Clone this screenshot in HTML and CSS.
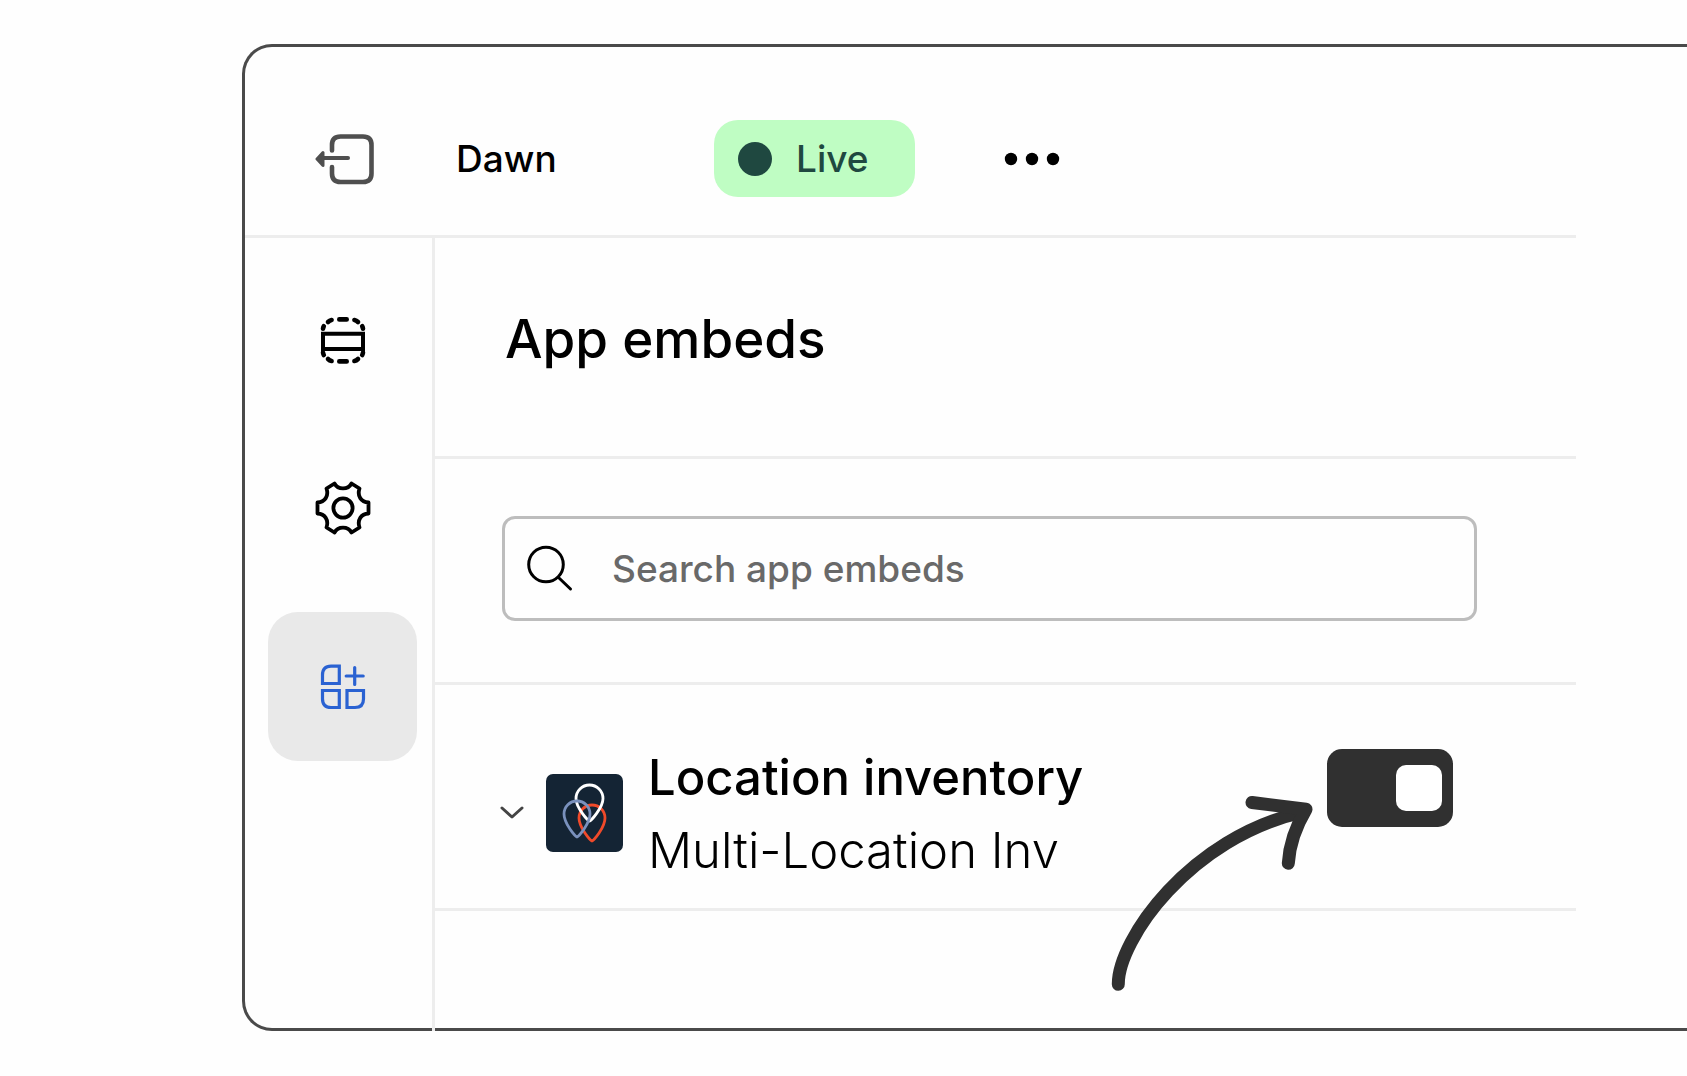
FILE: index.html
```html
<!DOCTYPE html>
<html lang="en">
<head>
  <meta charset="UTF-8" />
  <meta name="viewport" content="width=device-width, initial-scale=1.0"/>
  <title>App embeds</title>
  <link rel="stylesheet" href="styles.css">
</head>
<body>
  <div class="window">
    <header class="topbar">
      <button class="icon-btn exit" aria-label="Exit">
        <svg width="60" height="52" viewBox="0 0 60 52" fill="none" stroke="#4f4f4f" stroke-width="4.6" stroke-linecap="round" stroke-linejoin="round">
          <path d="M17 17.5V12Q17 3.5 25.5 3.5H48Q56.5 3.5 56.5 12V40.5Q56.5 49 48 49H25.5Q17 49 17 40.5V34"/>
          <path d="M8 25H33" stroke-width="4"/>
          <path d="M2 26L8 19.5V32.5Z" fill="#4f4f4f" stroke-width="3"/>
        </svg>
      </button>
      <span class="theme">Dawn</span>
      <span class="badge"><span class="dot"></span>Live</span>
      <button class="icon-btn more" aria-label="More">
        <svg width="56" height="16" viewBox="0 0 56 16" fill="#000">
          <circle cx="7" cy="8" r="6.2"/>
          <circle cx="28" cy="8" r="6.2"/>
          <circle cx="49" cy="8" r="6.2"/>
        </svg>
      </button>
    </header>

    <div class="main">
      <nav class="sidebar">
        <button class="nav-btn" aria-label="Sections">
          <svg width="46" height="50" viewBox="0 0 46 50" fill="none" stroke="#000" stroke-width="4.6" stroke-linecap="round">
            <path d="M3 17.8H43V33H3Z" stroke-width="4"/>
            <path d="M19.3 3.4H26.7M19.3 45.4H26.7"/>
            <path d="M8 6Q9.6 4.4 11.6 4M3 12.8Q3.2 11.2 3.8 10.2"/>
            <path d="M38 6Q36.4 4.4 34.4 4M43 12.8Q42.8 11.2 42.2 10.2"/>
            <path d="M8 43Q9.6 44.6 11.6 45M3 36.5Q3.2 38 3.8 39"/>
            <path d="M38 43Q36.4 44.6 34.4 45M43 36.5Q42.8 38 42.2 39"/>
          </svg>
        </button>
        <button class="nav-btn" aria-label="Theme settings">
          <svg width="58" height="56" viewBox="-29 -28 58 56" fill="none" stroke="#000" stroke-width="3.8" stroke-linejoin="round">
            <path d="M-8.5-24.5C-5-18 5-18 8.5-24.5L16.5-19.5C14-12 18-6 25.5-5.5V5.5C18 6 14 12 16.5 19.5L8.5 24.5C5 18-5 18-8.5 24.5L-16.5 19.5C-14 12-18 6-25.5 5.5V-5.5C-18-6-14-12-16.5-19.5Z"/>
            <circle r="9.6"/>
          </svg>
        </button>
        <button class="nav-btn active" aria-label="App embeds">
          <svg width="46" height="46" viewBox="0 0 46 46" fill="none" stroke="#2a62d2" stroke-width="3.2">
            <path d="M19.3 19.5H2.5V11Q2.5 2.2 11 2.2H19.3Z"/>
            <path d="M2.5 26.5H19.3V43.5H11Q2.5 43.5 2.5 35Z"/>
            <path d="M27 26.5H43.5V35Q43.5 43.5 35 43.5H27Z"/>
            <path d="M34.7 3.5V20.5M26.2 12H43.2" stroke-linecap="round"/>
          </svg>
        </button>
      </nav>

      <main class="panel">
        <section class="title">
          <h1>App embeds</h1>
        </section>

        <section class="search">
          <label class="search-box">
            <svg width="48" height="48" viewBox="0 0 48 48" fill="none" stroke="#000" stroke-width="3" stroke-linecap="round">
              <circle cx="20" cy="19.5" r="17.3"/>
              <path d="M32.5 32.5L44.5 44"/>
            </svg>
            <input type="text" placeholder="Search app embeds" aria-label="Search app embeds" />
          </label>
        </section>

        <section class="app-row">
          <button class="icon-btn" aria-label="Expand">
            <svg width="26" height="16" viewBox="0 0 26 16" fill="none" stroke="#444" stroke-width="3" stroke-linecap="round" stroke-linejoin="round">
              <path d="M3 3L13 12L23 3"/>
            </svg>
          </button>
          <svg class="app-logo" width="77" height="78" viewBox="0 0 77 78" fill="none" stroke-width="2.8">
            <rect width="77" height="78" rx="7" fill="#142434"/>
            <path transform="translate(33 31)" stroke="#f04a2a" d="M13 36C11.5 36 0 22.5 0 13A13 13 0 0 1 26 13C26 22.5 14.5 36 13 36Z"/>
            <path transform="translate(30 11)" stroke="#fff" d="M13.5 36C12 36 0 22.5 0 13.5A13.5 13.5 0 0 1 27 13.5C27 22.5 15 36 13.5 36Z"/>
            <path transform="translate(18 27)" stroke="#7a91bd" d="M13 36C11.5 36 0 22.5 0 13A13 13 0 0 1 26 13C26 22.5 14.5 36 13 36Z"/>
          </svg>
          <div class="app-text">
            <label class="app-name" for="embed">Location inventory</label>
            <div class="app-sub">Multi-Location Inv</div>
          </div>
          <input class="toggle" id="embed" type="checkbox" checked />
          <!-- hand-drawn pointer to the toggle -->
          <svg class="pointer" width="216" height="206" viewBox="0 0 216 206" fill="none" stroke="#303030" stroke-width="13" stroke-linecap="round" stroke-linejoin="round">
            <path d="M13.3 194.3C13 150 85 47 198 22"/>
            <path d="M147 12.5L201 19.3Q185 46 183.3 73.3"/>
          </svg>
        </section>
      </main>
    </div>
  </div>
</body>
</html>
```

FILE: styles.css
```css
* {
  box-sizing: border-box;
}

body {
  margin: 0;
  padding: 44px 0 45px 242px;
  background-color: #fefefe;
  font-family: Inter, "Liberation Sans", sans-serif;
  font-weight: 500;
  color: #000;
}

button {
  border: none;
  background: none;
  padding: 0;
}

svg {
  display: block;
  flex-shrink: 0;
}

.window {
  display: flex;
  flex-direction: column;
  min-height: calc(100vh - 89px);
  padding-right: 111px;
  border: 3px solid #4a4a4a;
  border-right: none;
  border-radius: 30px 0 0 30px;
}

.topbar {
  display: grid;
  grid-template-columns: 141px 258px auto 1fr;
  align-items: center;
  padding: 73px 0 38px 70px;
  border-bottom: 3px solid #ededed;
}

.theme {
  font-size: 37px;
}

.badge {
  display: flex;
  align-items: center;
  gap: 24px;
  height: 77px;
  padding: 0 46px 0 24px;
  border-radius: 24px;
  background-color: #bffdc3;
  color: #1f4840;
  font-size: 37px;
}

.dot {
  width: 34px;
  height: 34px;
  border-radius: 50%;
  background-color: #1f4840;
}

.more {
  margin-left: 89px;
}

.main {
  display: flex;
  flex: 1;
}

/* divider runs down over the window border */
.sidebar {
  width: 190px;
  margin-bottom: -3px;
  padding: 28px 15px 0 23px;
  border-right: 3px solid #ededed;
}

.nav-btn {
  display: flex;
  align-items: center;
  justify-content: center;
  width: 149px;
  height: 149px;
  margin-bottom: 18px;
  border-radius: 30px;
}

.nav-btn.active {
  margin-top: 30px;
  background-color: #e9e9e9;
}

.panel {
  flex: 1;
}

.panel section {
  border-bottom: 3px solid #ededed;
}

.title {
  padding: 69px 70px 85px;
}

h1 {
  margin: 0;
  font-size: 53px;
  line-height: 64px;
  font-weight: 500;
}

.search {
  padding: 57px 99px 61px 67px;
}

.search-box {
  display: flex;
  align-items: center;
  gap: 38px;
  height: 105px;
  padding: 0 21px;
  border: 3px solid #bdbdbd;
  border-radius: 13px;
}

.search-box input {
  flex: 1;
  min-width: 0;
  padding: 0;
  border: none;
  outline: none;
  background: none;
  font: inherit;
  font-size: 37px;
}

.search-box input::placeholder {
  color: #696969;
  opacity: 1;
}

.app-row {
  position: relative;
  display: flex;
  align-items: center;
  padding: 53px 123px 21px 64px;
}

.app-logo {
  margin: 0 25px 0 21px;
}

.app-text {
  flex: 1;
  padding-top: 3px;
  font-size: 49px;
  line-height: 73px;
}

.app-name {
  display: block;
}

.app-sub {
  font-weight: 300;
}

.toggle {
  appearance: none;
  align-self: flex-start;
  width: 126px;
  height: 78px;
  margin: 11px 0 0;
  padding: 16px 11px;
  border-radius: 15px;
  background-color: #303030;
}

.toggle::before {
  content: "";
  display: block;
  width: 46px;
  height: 46px;
  border-radius: 10px;
  background-color: #fff;
}

.toggle:checked::before {
  margin-left: auto;
}

.pointer {
  position: absolute;
  top: 105px;
  right: 255px;
}
```
